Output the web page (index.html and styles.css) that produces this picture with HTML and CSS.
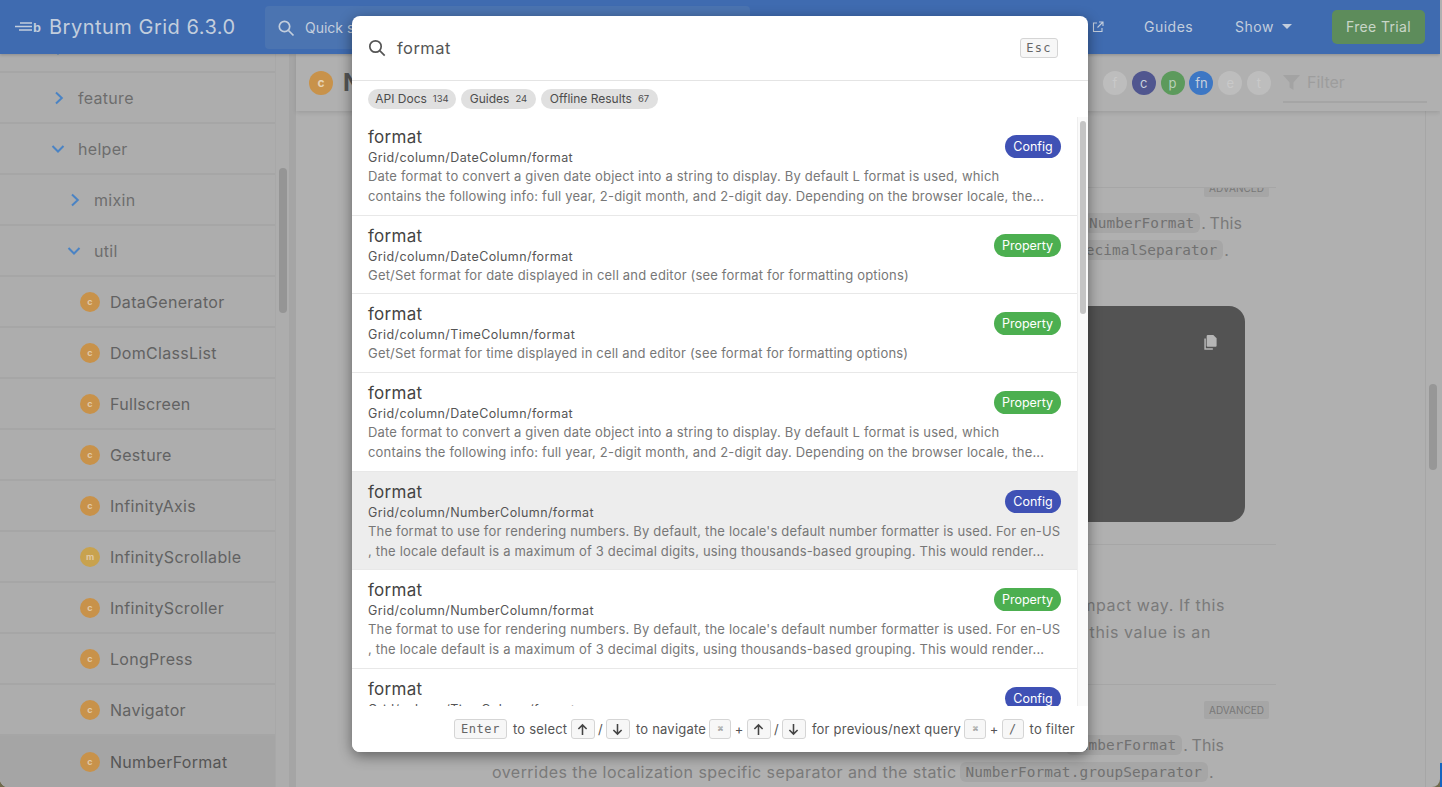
FILE: index.html
```html
<!DOCTYPE html>
<html lang="en">
<head>
<meta charset="utf-8">
<title>Bryntum Grid 6.3.0</title>
<link rel="stylesheet" href="styles.css">
</head>
<body>
<div class="window">
  <header class="topbar">
    <div class="brand">
      <svg class="logo" width="28" height="14" viewBox="0 0 28 14"><g stroke="#c3cedd" stroke-width="1.4" fill="none"><path d="M6 3h12M1 6.5h17M5 10h13"/></g><text x="19" y="11.5" class="logo-b">b</text></svg>
      <span class="brand-name">Bryntum Grid 6.3.0</span>
    </div>
    <div class="quick">
      <svg width="18" height="18" viewBox="0 0 18 18" fill="none" stroke="#c3cedd" stroke-width="1.7"><circle cx="7.5" cy="7.5" r="5.2"/><path d="M11.5 11.5l5 5"/></svg>
      <span class="quick-text">Quick search</span>
    </div>
    <nav class="nav">
      <a class="nav-link nav-api">API Docs<svg width="12" height="12" viewBox="0 0 12 12" fill="none" stroke="#c3cedd" stroke-width="1.1"><path d="M5 2H1.500v8.500H10V7M7 1h4v4M11 1L5.500 6.500"/></svg></a>
      <a class="nav-link nav-guides">Guides</a>
      <a class="nav-link nav-show">Show<span class="caret"></span></a>
      <a class="trial">Free Trial</a>
    </nav>
  </header>

  <div class="body">
    <aside class="sidebar">
      <ul class="tree">
        <li class="row row-cut"><svg class="chev cut-chev" width="14" height="8" viewBox="0 0 14 8"><path d="M1.500 1l5.500 5.500L12.500 1"/></svg></li>
        <li class="row lvl1"><svg class="chev" width="10" height="14" viewBox="0 0 10 14"><path d="M2 1.500L7.800 7 2 12.500"/></svg><span>feature</span></li>
        <li class="row lvl1"><svg class="chev" width="14" height="10" viewBox="0 0 14 10"><path d="M1.500 2l5.500 5.500L12.500 2"/></svg><span>helper</span></li>
        <li class="row lvl2"><svg class="chev" width="10" height="14" viewBox="0 0 10 14"><path d="M2 1.500L7.800 7 2 12.500"/></svg><span>mixin</span></li>
        <li class="row lvl2"><svg class="chev" width="14" height="10" viewBox="0 0 14 10"><path d="M1.500 2l5.500 5.500L12.500 2"/></svg><span>util</span></li>
        <li class="row leaf"><i class="dot">c</i><span>DataGenerator</span></li>
        <li class="row leaf"><i class="dot">c</i><span>DomClassList</span></li>
        <li class="row leaf"><i class="dot">c</i><span>Fullscreen</span></li>
        <li class="row leaf"><i class="dot">c</i><span>Gesture</span></li>
        <li class="row leaf"><i class="dot">c</i><span>InfinityAxis</span></li>
        <li class="row leaf"><i class="dot dot-m">m</i><span>InfinityScrollable</span></li>
        <li class="row leaf"><i class="dot">c</i><span>InfinityScroller</span></li>
        <li class="row leaf"><i class="dot">c</i><span>LongPress</span></li>
        <li class="row leaf"><i class="dot">c</i><span>Navigator</span></li>
        <li class="row leaf row-active"><i class="dot">c</i><span>NumberFormat</span></li>
      </ul>
    </aside>
    <div class="side-track"><div class="side-thumb"></div></div>
    <div class="gutter"></div>

    <main class="main">
      <div class="titlebar">
        <i class="title-dot">c</i>
        <h1 class="title">NumberFormat</h1>
        <div class="chips">
          <i class="chip chip-off">f</i>
          <i class="chip chip-c">c</i>
          <i class="chip chip-p">p</i>
          <i class="chip chip-fn">fn</i>
          <i class="chip chip-off">e</i>
          <i class="chip chip-off">t</i>
        </div>
        <div class="filter">
          <svg width="17" height="15" viewBox="0 0 17 15"><path d="M0 0h17l-6.500 7.500V15l-4-2.500V7.500z" fill="#a3a3a3"/></svg>
          <span>Filter</span>
        </div>
      </div>
      <div class="scroller">
        <div class="pane">
          <div class="doc">
            <div class="member member-cut">
              <span class="adv">ADVANCED</span>
              <p class="line line-1"><code>NumberFormat</code><span class="tail">. This</span></p>
              <p class="line line-2"><code>NumberFormat.decimalSeparator</code><span class="tail">.</span></p>
              <div class="code">
                <svg class="copy" width="16" height="17" viewBox="0 0 16 18"><path d="M5.500 1h6l3.500 3.500v8a1 1 0 0 1-1 1H5.500a1 1 0 0 1-1-1v-10.500a1 1 0 0 1 1-1z" fill="#b5b5b5"/><path d="M2.800 4.800v11.200h8.200" fill="none" stroke="#b5b5b5" stroke-width="1.600"/></svg>
              </div>
            </div>
            <div class="member member-2">
              <p class="line line-a">mpact way. If this</p>
              <p class="line line-b">f this value is an</p>
            </div>
            <div class="member member-3">
              <span class="adv adv-flow">ADVANCED</span>
              <p class="line line-c"><code>NumberFormat</code><span class="tail">. This</span></p>
              <p class="line line-d">overrides the localization specific separator and the static <code>NumberFormat.groupSeparator</code><span class="tail">.</span></p>
            </div>
          </div>
        </div>
        <div class="page-track"><div class="page-thumb"></div></div>
      </div>
    </main>
  </div>

  <section class="modal">
    <div class="m-head">
      <svg width="18" height="18" viewBox="0 0 18 18" fill="none" stroke="#555" stroke-width="1.700"><circle cx="7.500" cy="7.500" r="5.700"/><path d="M11.700 11.700l5 5"/></svg>
      <span class="m-query">format</span>
      <kbd class="esc">Esc</kbd>
    </div>
    <div class="m-tabs">
      <span class="tab tab-api">API Docs <small>134</small></span>
      <span class="tab tab-guides">Guides <small>24</small></span>
      <span class="tab tab-off">Offline Results <small>67</small></span>
    </div>
    <div class="m-results">
      <ul class="list">
        <li class="hit">
          <div class="hit-text"><div class="hit-title">format</div><div class="hit-path">Grid/column/DateColumn/format</div><div class="hit-desc">Date format to convert a given date object into a string to display. By default L format is used, which</div><div class="hit-desc">contains the following info: full year, 2-digit month, and 2-digit day. Depending on the browser locale, the...</div></div>
          <span class="tag tag-config">Config</span>
        </li>
        <li class="hit">
          <div class="hit-text"><div class="hit-title">format</div><div class="hit-path">Grid/column/DateColumn/format</div><div class="hit-desc">Get/Set format for date displayed in cell and editor (see format for formatting options)</div></div>
          <span class="tag tag-prop">Property</span>
        </li>
        <li class="hit">
          <div class="hit-text"><div class="hit-title">format</div><div class="hit-path">Grid/column/TimeColumn/format</div><div class="hit-desc">Get/Set format for time displayed in cell and editor (see format for formatting options)</div></div>
          <span class="tag tag-prop">Property</span>
        </li>
        <li class="hit">
          <div class="hit-text"><div class="hit-title">format</div><div class="hit-path">Grid/column/DateColumn/format</div><div class="hit-desc">Date format to convert a given date object into a string to display. By default L format is used, which</div><div class="hit-desc">contains the following info: full year, 2-digit month, and 2-digit day. Depending on the browser locale, the...</div></div>
          <span class="tag tag-prop">Property</span>
        </li>
        <li class="hit hit-active">
          <div class="hit-text"><div class="hit-title">format</div><div class="hit-path">Grid/column/NumberColumn/format</div><div class="hit-desc">The format to use for rendering numbers. By default, the locale's default number formatter is used. For en-US</div><div class="hit-desc">, the locale default is a maximum of 3 decimal digits, using thousands-based grouping. This would render...</div></div>
          <span class="tag tag-config">Config</span>
        </li>
        <li class="hit">
          <div class="hit-text"><div class="hit-title">format</div><div class="hit-path">Grid/column/NumberColumn/format</div><div class="hit-desc">The format to use for rendering numbers. By default, the locale's default number formatter is used. For en-US</div><div class="hit-desc">, the locale default is a maximum of 3 decimal digits, using thousands-based grouping. This would render...</div></div>
          <span class="tag tag-prop">Property</span>
        </li>
        <li class="hit">
          <div class="hit-text"><div class="hit-title">format</div><div class="hit-path">Grid/column/TimeColumn/format</div></div>
          <span class="tag tag-config">Config</span>
        </li>
      </ul>
      <div class="m-track"><div class="m-thumb"></div></div>
    </div>
    <footer class="m-foot">
      <kbd class="key key-enter">Enter</kbd><span class="t">to select</span>
      <kbd class="key key-arrow"><svg width="11" height="13" viewBox="0 0 12 14" fill="none" stroke="#444" stroke-width="1.700"><path d="M6 13V2M1.500 6.500L6 2l4.500 4.500"/></svg></kbd><span>/</span>
      <kbd class="key key-arrow"><svg width="11" height="13" viewBox="0 0 12 14" fill="none" stroke="#444" stroke-width="1.700"><path d="M6 1v11M1.500 7.500L6 12l4.500-4.500"/></svg></kbd><span class="t">to navigate</span>
      <kbd class="key key-cmd">⌘</kbd><span>+</span>
      <kbd class="key key-arrow"><svg width="11" height="13" viewBox="0 0 12 14" fill="none" stroke="#444" stroke-width="1.700"><path d="M6 13V2M1.500 6.500L6 2l4.500 4.500"/></svg></kbd><span>/</span>
      <kbd class="key key-arrow"><svg width="11" height="13" viewBox="0 0 12 14" fill="none" stroke="#444" stroke-width="1.700"><path d="M6 1v11M1.500 7.500L6 12l4.500-4.500"/></svg></kbd><span class="t">for previous/next query</span>
      <kbd class="key key-cmd">⌘</kbd><span>+</span>
      <kbd class="key key-slash">/</kbd><span class="t">to filter</span>
    </footer>
  </section>
</div>
</body>
</html>
```
FILE: styles.css
```css
* { box-sizing: border-box; }
html, body { margin: 0; height: 100%; }
body {
  overflow: hidden;
  font-family: Inter, "Open Sans", sans-serif;
  background:
    linear-gradient(#b0b0b0 0 763px, transparent 763px),
    linear-gradient(90deg, #6f6a4c 0 1440px, #1565c0 1440px);
}
ul { list-style: none; margin: 0; padding: 0; }
p, h1 { margin: 0; }
i { font-style: normal; }

.window {
  position: relative;
  width: 1440px;
  height: 787px;
  display: flex;
  flex-direction: column;
  overflow: hidden;
  border-radius: 0 0 8px 8px;
  background: #b0b0b0;
}

/* top bar */
.topbar {
  flex: none;
  height: 54px;
  display: flex;
  align-items: center;
  padding-left: 14px;
  background: #3f6bb0;
  box-shadow: 0 1px 3px rgba(0,0,0,.2);
  position: relative;
  z-index: 2;
  color: #c3cedd;
}
.brand { flex: none; width: 251px; display: flex; align-items: center; gap: 7px; }
.logo { flex: none; }
.logo-b { font: 700 13px "Liberation Sans", sans-serif; fill: #c3cedd; }
.brand-name { font-size: 20px; letter-spacing: .5px; white-space: nowrap; }
.quick {
  flex: none;
  width: 485px;
  height: 43px;
  margin-top: 1px;
  display: flex;
  align-items: center;
  gap: 10px;
  padding-left: 12px;
  background: #4b74b1;
  border-radius: 4px;
  font-size: 14px;
}
.quick-text { padding-bottom: 1px; }
.nav { flex: 1; display: flex; align-items: center; height: 100%; }
.nav-link { flex: none; font-size: 14px; white-space: nowrap; display: flex; align-items: center; letter-spacing: .5px; padding-bottom: 1px; }
.nav-api { margin-left: 230px; width: 124px; gap: 4px; justify-content: flex-end; }
.nav-guides { margin-left: 40px; width: 50px; }
.nav-show { margin-left: 41px; width: 57px; gap: 8px; }
.caret { width: 0; height: 0; border: 5px solid transparent; border-top: 5px solid #c3cedd; border-bottom: 0; }
.trial {
  flex: none;
  margin-left: 40px;
  width: 93px;
  height: 34px;
  padding-bottom: 1px;
  background: #5d8c5b;
  border-radius: 5px;
  color: #c9d6c8;
  font-size: 14px;
  letter-spacing: .35px;
  display: flex;
  align-items: center;
  justify-content: center;
}

/* body */
.body { flex: 1; display: flex; min-height: 0; }
.sidebar { width: 276px; flex: none; background: #adadad; border-right: 1px solid #a8a8a8; overflow: hidden; }
.row {
  height: 51px;
  display: flex;
  align-items: center;
  border-bottom: 2px solid #a6a6a6;
  font-size: 16px;
  letter-spacing: .3px;
  color: #6d6d6d;
}
.row-cut { height: 19px; padding-left: 51px; align-items: flex-start; overflow: hidden; }
.cut-chev { margin-top: -7px; }
.chev { flex: none; fill: none; stroke: #4a83c4; stroke-width: 2; }
.lvl1 { padding-left: 51px; }
.lvl1 .chev { margin-right: 13px; }
.lvl1 .chev[width="10"] { margin-left: 3px; margin-right: 14px; }
.lvl2 { padding-left: 67px; }
.lvl2 .chev { margin-right: 13px; }
.lvl2 .chev[width="10"] { margin-left: 3px; margin-right: 14px; }
.leaf { padding-left: 80px; gap: 10px; color: #626262; }
.dot {
  width: 20px;
  height: 20px;
  flex: none;
  border-radius: 50%;
  background: #c8924a;
  color: #e2c9a5;
  font-size: 9px;
  font-weight: 700;
  letter-spacing: 0;
  display: flex;
  align-items: center;
  justify-content: center;
}
.dot-m { background: #c8a24e; }
.row-active { background: #a5a5a5; border: 0; color: #555; }
.side-track { width: 13px; flex: none; background: #adadad; padding: 114px 3px 0 3px; }
.side-thumb { width: 8px; height: 145px; border-radius: 4px; background: #959595; }
.gutter { width: 7px; flex: none; background: #a5a5a5; }

/* main */
.main { flex: 1; min-width: 0; display: flex; flex-direction: column; }
.titlebar {
  flex: none;
  height: 57px;
  display: flex;
  align-items: center;
  padding-left: 13px;
  background: #b0b0b0;
  box-shadow: 0 2px 4px rgba(0,0,0,.1);
  position: relative;
  z-index: 1;
}
.title-dot {
  width: 24px;
  height: 24px;
  border-radius: 50%;
  background: #c8924a;
  color: #e6d3b5;
  font-size: 12px;
  font-weight: 700;
  display: flex;
  align-items: center;
  justify-content: center;
  flex: none;
}
.title { flex: none; margin-left: 10px; font-size: 24px; line-height: 1; font-weight: 700; color: #555; width: 760px; white-space: nowrap; overflow: hidden; }
.chips { display: flex; gap: 4.800px; flex: none; }
.chip {
  width: 24px;
  height: 24px;
  border-radius: 50%;
  font-size: 13px;
  display: flex;
  align-items: center;
  justify-content: center;
  color: #c8d0dd;
}
.chip-off { background: #bdbdbd; color: #c9c9c9; }
.chip-c { background: #50568f; }
.chip-p { background: #5c9a5c; color: #b9d0b9; }
.chip-fn { background: #3d77c4; }
.filter {
  flex: none;
  margin-left: 12px;
  width: 144px;
  height: 40px;
  margin-top: 1px;
  display: flex;
  align-items: center;
  gap: 7px;
  border-bottom: 2px solid #a5a5a5;
  color: #9d9d9d;
  font-size: 16px;
}

.scroller { flex: 1; display: flex; min-height: 0; }
.pane { flex: 1; min-width: 0; padding: 76px 0 0 196px; overflow: hidden; }
.doc { width: 784px; height: 100%; overflow: hidden; border-top: 1px solid #a6a6a6; position: relative; color: #7a7a7a; font-size: 16px; }
.page-track { width: 15px; flex: none; border-left: 1px solid #a6a6a6; padding: 273px 3px 0 3px; }
.page-thumb { width: 8px; height: 86px; border-radius: 4px; background: #979797; }

.member { position: relative; }
.member-cut { height: 357px; padding-top: 21px; border-bottom: 1px solid #a6a6a6; }
.adv {
  position: absolute;
  right: 7px;
  top: -9px;
  height: 18px;
  width: 65px;
  display: flex;
  align-items: center;
  justify-content: center;
  border-radius: 2px;
  background: #a6a6a6;
  color: #787878;
  font-size: 10px;
}
.line {
  height: 27px;
  display: flex;
  align-items: center;
  justify-content: flex-end;
  white-space: nowrap;
  letter-spacing: .45px;
}
.line-1 { padding-right: 34px; }
.line-2 { padding-right: 47px; }
.tail { margin-left: 1px; letter-spacing: .1px; word-spacing: -1px; }
code {
  font: 14.4px "DejaVu Sans Mono", monospace;
  letter-spacing: .1px;
  color: #717171;
  background: #a6a6a6;
  border-radius: 6px;
  padding: 2px 6px 2px 5px;
}
.line-d code { margin-left: 4px; }
.code {
  position: relative;
  width: 753px;
  height: 216px;
  margin-top: 43px;
  border-radius: 16px;
  background: #535353;
}
.copy { position: absolute; right: 27px; top: 28px; }
.member-2 { height: 140px; border-bottom: 1px solid #a6a6a6; padding-top: 46px; }
.line-a { padding-right: 51px; letter-spacing: .6px; }
.line-b { padding-right: 65px; letter-spacing: .6px; }
.member-3 { padding-top: 46px; }
.adv-flow { top: 16px; }
.line-c { padding-right: 52px; }
.line-d { justify-content: flex-start; }

/* search modal */
.modal {
  position: absolute;
  left: 352px;
  top: 16px;
  width: 736px;
  height: 736px;
  display: flex;
  flex-direction: column;
  background: #fff;
  border-radius: 8px;
  box-shadow: 0 4px 14px rgba(0,0,0,.45);
  color: #555;
  overflow: hidden;
  z-index: 5;
}
.m-head {
  flex: none;
  height: 65px;
  display: flex;
  align-items: center;
  padding: 0 30px 0 16px;
  border-bottom: 1px solid #e4e4e4;
}
.m-query { flex: 1; margin-left: 11px; font-size: 16.500px; letter-spacing: .45px; color: #555; }
.esc {
  width: 38px;
  height: 20px;
  display: flex;
  align-items: center;
  justify-content: center;
  border: 1px solid #d5d5d5;
  border-radius: 3px;
  background: #f7f7f7;
  font: 12px "DejaVu Sans Mono", monospace;
  letter-spacing: 1.300px;
  color: #666;
}
.m-tabs { flex: none; height: 36px; display: flex; align-items: center; gap: 5px; padding: 0 0 1px 16px; }
.tab {
  height: 20px;
  display: flex;
  align-items: center;
  justify-content: center;
  gap: 6px;
  border-radius: 10px;
  background: #e0e0e0;
  color: #4d4d4d;
  font-size: 12px;
  white-space: nowrap;
}
.tab small { font-size: 9.500px; }
.tab-api { width: 88px; }
.tab-guides { width: 75px; }
.tab-off { width: 117px; }

.m-results { flex: 1; min-height: 0; display: flex; overflow: hidden; }
.list { flex: 1; min-width: 0; }
.hit {
  display: flex;
  align-items: flex-start;
  padding: 8px 16px 8.200px 16px;
  border-bottom: 1px solid #e8e8e8;
}
.hit-active { background: #ededed; }
.hit-text { flex: 1; min-width: 0; }
.hit-title { height: 24px; line-height: 25.500px; font-size: 17px; color: #444; letter-spacing: .3px; }
.hit-path { height: 18px; line-height: 18px; font-size: 12.500px; color: #555; letter-spacing: .41px; }
.hit-desc { height: 19.700px; line-height: 19.700px; font-size: 13px; letter-spacing: .18px; color: #777; white-space: nowrap; }
.tag {
  flex: none;
  height: 23px;
  margin-top: 10px;
  border-radius: 12px;
  display: flex;
  align-items: center;
  justify-content: center;
  color: #fff;
  font-size: 12.500px;
}
.tag-config { width: 56px; background: #3f51b5; }
.tag-prop { width: 67px; background: #4caf50; }
.m-track { width: 11px; flex: none; background: #fafafa; border-left: 1px solid #eee; padding: 4px 2px 0 2px; }
.m-thumb { width: 6px; height: 193px; border-radius: 3px; background: #c4c4c4; }

.m-foot {
  flex: none;
  height: 46px;
  display: flex;
  align-items: center;
  justify-content: flex-end;
  gap: 3.300px;
  padding-right: 13px;
  background: #fff;
  font-size: 13px;
  color: #555;
  white-space: nowrap;
}
.t { margin-left: 2.700px; letter-spacing: .22px; }
.key {
  height: 20px;
  display: flex;
  align-items: center;
  justify-content: center;
  border: 1px solid #d5d5d5;
  border-radius: 3px;
  background: #f7f7f7;
  font: 12px "DejaVu Sans Mono", monospace;
  color: #666;
}
.key-enter { width: 53px; letter-spacing: .6px; }
.key-arrow { width: 24px; }
.key-cmd { width: 22px; font-size: 9px; color: #888; }
.key-slash { width: 22px; }
```
